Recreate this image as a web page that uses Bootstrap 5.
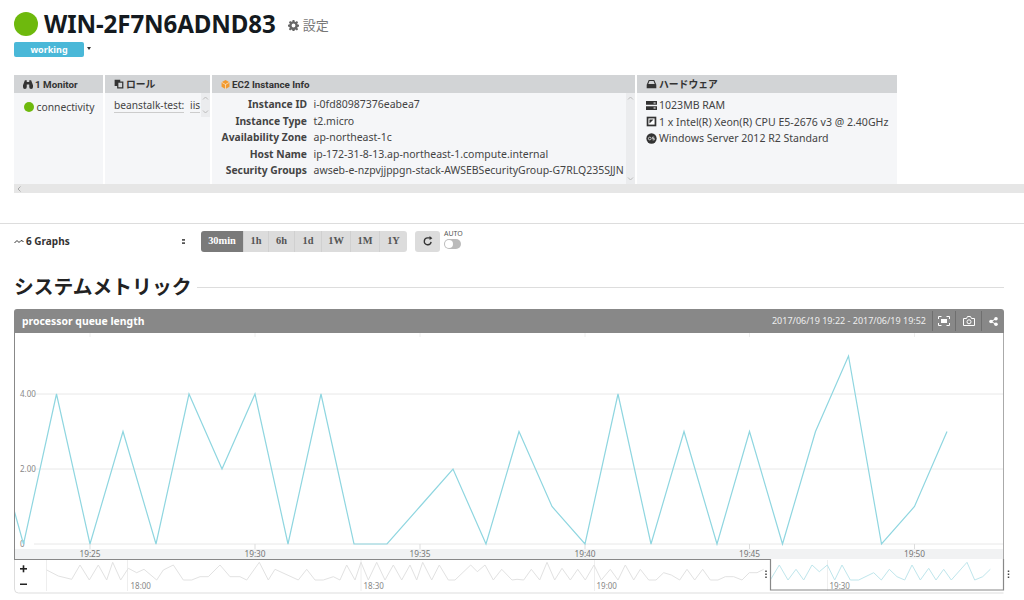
<!DOCTYPE html>
<html lang="ja"><head><meta charset="utf-8"><title>WIN-2F7N6ADND83</title>
<link href="https://cdn.jsdelivr.net/npm/bootstrap@5.3.0/dist/css/bootstrap.min.css" rel="stylesheet">
<style>
html,body{margin:0;height:600px;overflow:hidden;background:#fff}
body{font-family:"Noto Sans","Noto Sans CJK JP",sans-serif;font-size:11.2px;color:#333;line-height:16.5px}
.page-pad{padding:11px 0 0 14px}
.host-dot{width:24px;height:24px;border-radius:50%;background:#6eb90d;margin-right:6px}
.host-name{font-size:24.1px;font-weight:700;color:#141a20;line-height:26px;margin:0;letter-spacing:-.1px}
.setting-link{font-size:13px;color:#777;margin-left:12px;margin-top:2px}
.state-row{height:15px;margin-top:5px}
.state-pill{width:70px;height:15px;background:#4ab8d8;border-radius:2px;color:#fff;font-size:9px;font-weight:700;line-height:15px;text-align:center}
.caret-mini{width:0;height:0;border:2.500px solid transparent;border-top:3px solid #333;border-bottom:0;margin-left:3px;margin-top:-2px}
.info-wrap{margin-top:18px;height:118px;width:1010px}
.info-table{gap:2px;height:109px;width:883px}
.info-col{background:#f5f6f8;position:relative}
.info-head{height:18px;background:#d2d4d6;font-family:Roboto,"Noto Sans CJK JP",sans-serif;font-weight:700;font-size:9.800px;line-height:19px;padding-left:9px;color:#333;display:flex;align-items:center;gap:2px}
.col-a{width:89px}.col-b{width:105px}.col-c{width:423px}.col-d{width:260px}
.info-body{height:91px;position:relative}
.conn-row{padding-top:6px}
.vscroll{position:absolute;right:0;top:0;width:9px;background:#ebecee}
.vscroll svg{position:absolute;left:1px}
.role-tag{border-bottom:1px solid #ccc;padding-bottom:0}
.kv{display:grid;grid-template-columns:95px 1fr;column-gap:6.500px;padding:3px 0 0 0;white-space:nowrap;overflow:hidden;width:414px}
.kv b{text-align:right;font-weight:700;font-size:10.300px;line-height:16.5px}
.kv span{line-height:16.5px;font-size:10.500px}
.hw-row{height:16.5px;display:flex;align-items:center;gap:2px;font-size:10.550px;white-space:nowrap}
.hscroll{height:9px;background:#e6e6e6;color:#999;position:relative}
.hscroll svg{position:absolute;left:3px;top:2px}
.sep-line{height:1px;background:#ddd;margin:30px 0 0 0}
.tool-row{height:34px;align-items:center;padding-left:14px}
.graph-count{width:168px;font-weight:700;font-size:10px;display:flex;align-items:center;gap:2px}
.dots-v{width:19px}
.range-group{height:21px;border-radius:3px;overflow:hidden}
.range-btn{height:21px;background:#dcdcdc;border:0;border-right:1px solid #d0d0d0;padding:0;font-weight:700;color:#555;font-family:"Liberation Serif",serif;font-size:10.400px}
.range-on{background:#7a7a7a;color:#fff;width:43px}
.reload-btn{width:25px;height:21px;background:#dcdcdc;border:0;border-radius:3px;margin-left:8px;padding:0;display:flex;align-items:center;justify-content:center}
.auto-wrap{margin-left:4px;width:30px;font-size:7px;line-height:8px;color:#555;margin-top:-3px}
.auto-switch{display:block;width:17px;height:10px;border-radius:5px;background:#bbb;position:relative;margin-top:1px}
.auto-switch::after{content:"";position:absolute;left:1px;top:1px;width:8px;height:8px;border-radius:50%;background:#fff}
.section-title{margin:15px 20px 0 14px;height:28px;align-items:center}
.section-title h2{font-size:19.800px;font-weight:700;color:#222;margin:0;white-space:nowrap;line-height:28px}
.section-title i{flex:1;height:1px;background:#ddd;margin-left:6px;margin-top:1px}
.graph-panel{margin:8px 20px 0 14px;width:990px}
.graph-head{height:24px;background:#888;border-radius:3px 3px 0 0;color:#fff;align-items:center}
.graph-title{font-size:10.4px;font-weight:700;padding-left:8px;flex:1}
.graph-range{font-size:9px;color:#eee;padding-right:6px}
.head-tool{height:20px;border-left:1px solid #6f6f6f;display:flex;align-items:center;justify-content:center}
.plot-svg{display:block}
</style></head><body>
<div class="page-pad">
  <div class="d-flex align-items-center">
    <div class="host-dot"></div>
    <h1 class="host-name">WIN-2F7N6ADND83</h1>
    <div class="setting-link d-flex align-items-center gap-1">
      <svg width="11" height="11" viewBox="0 0 16 16"><path fill="#666" d="M6.7 0h2.6l.4 2.2 1.4.6L12.900 1.500l1.800 1.800-1.300 1.900.6 1.400 2 .4v2.600l-2 .4-.6 1.400 1.300 1.900-1.800 1.800-1.800-1.300-1.400.6-.4 2.200H6.700l-.4-2.200-1.400-.6-1.800 1.300-1.800-1.800 1.300-1.900-.6-1.400-2-.4V6.900l2-.4.600-1.400-1.300-1.900 1.800-1.800 1.800 1.300 1.400-.6zM8 5.200a2.800 2.800 0 1 0 0 5.600 2.800 2.800 0 0 0 0-5.600z"/></svg>
      <span>設定</span>
    </div>
  </div>
  <div class="state-row d-flex align-items-center">
    <div class="state-pill">working</div>
    <div class="caret-mini"></div>
  </div>
  <div class="info-wrap">
    <div class="info-table d-flex">
      <div class="info-col col-a">
        <div class="info-head"><svg width="10" height="9" viewBox="0 0 16 14"><path fill="#333" d="M3 0h3v3h4V0h3l3 8v3a3 3 0 0 1-6 0V7H6v4a3 3 0 0 1-6 0V8z"/></svg>1 Monitor</div>
        <div class="d-flex align-items-center conn-row">
          <span class="d-inline-block rounded-circle" style="width:10px;height:10px;background:#6eb90d;margin-left:10px"></span>
          <span style="font-size:10.300px;color:#444;margin-left:2.500px">connectivity</span>
        </div>
      </div>
      <div class="info-col col-b">
        <div class="info-head"><svg width="10" height="10" viewBox="0 0 16 16"><path fill="#333" d="M1 1h9v3h5v11H5v-4H1zM7 6v7h6V6z"/></svg>ロール</div>
        <div class="info-body" style="padding:4px 0 0 9px;white-space:nowrap;font-size:10.200px;color:#444">
          <span class="role-tag">beanstalk-test:</span> <span class="role-tag" style="margin-left:3px">iis</span>
          <div class="vscroll" style="height:24px"><svg width="7" height="4" viewBox="0 0 7 4" style="top:3px"><path d="M1 3.500 3.500 1 6 3.500" fill="none" stroke="#bbb"/></svg><svg width="7" height="4" viewBox="0 0 7 4" style="bottom:3px"><path d="M1 .5 3.500 3 6 .5" fill="none" stroke="#bbb"/></svg></div>
        </div>
      </div>
      <div class="info-col col-c">
        <div class="info-head"><svg width="9" height="9" viewBox="0 0 16 16"><path fill="#f29a2e" d="M8 0l7 4v8l-7 4-7-4V4z"/><path stroke="#fff" fill="none" d="M1 4l7 4 7-4M8 8v8"/></svg>EC2 Instance Info</div>
        <div class="info-body">
          <div class="kv" style="color:#444">
            <b>Instance ID</b><span>i-0fd80987376eabea7</span>
            <b>Instance Type</b><span>t2.micro</span>
            <b>Availability Zone</b><span>ap-northeast-1c</span>
            <b>Host Name</b><span>ip-172-31-8-13.ap-northeast-1.compute.internal</span>
            <b>Security Groups</b><span>awseb-e-nzpvjjppgn-stack-AWSEBSecurityGroup-G7RLQ235SJJN</span>
          </div>
          <div class="vscroll" style="height:91px"><svg width="7" height="4" viewBox="0 0 7 4" style="top:3px"><path d="M1 3.500 3.500 1 6 3.500" fill="none" stroke="#bbb"/></svg><svg width="7" height="4" viewBox="0 0 7 4" style="bottom:3px"><path d="M1 .5 3.500 3 6 .5" fill="none" stroke="#bbb"/></svg></div>
        </div>
      </div>
      <div class="info-col col-d">
        <div class="info-head"><svg width="11" height="10" viewBox="0 0 16 14"><path fill="#333" d="M4 1h8l3 7v5H1V8zM5 2.500 3.300 7h9.400L11 2.500z"/></svg>ハードウェア</div>
        <div class="info-body" style="padding:4px 0 0 9px;color:#444">
          <div class="hw-row"><svg width="11" height="9" viewBox="0 0 16 13"><path fill="#333" d="M0 0h16v5.500H0zM0 7.500h16V13H0z"/><path fill="#fff" d="M11 2h3v1.500h-3zM11 9.500h3V11h-3z"/></svg>1023MB RAM</div>
          <div class="hw-row"><svg width="11" height="11" viewBox="0 0 16 16"><path fill="#333" d="M1 1h14v14H1z"/><path fill="#fff" d="M3.500 3.500h9v9h-9z"/><path fill="#333" d="M5 5h6l-6 6z"/></svg>1 x Intel(R) Xeon(R) CPU E5-2676 v3 @ 2.40GHz</div>
          <div class="hw-row"><svg width="11" height="11" viewBox="0 0 16 16"><circle cx="8" cy="8" r="7.500" fill="#333"/><circle cx="5.500" cy="8" r="2" fill="none" stroke="#fff"/><path d="M12 6h-2.500v2H12v2H9.500" fill="none" stroke="#fff"/></svg>Windows Server 2012 R2 Standard</div>
        </div>
      </div>
    </div>
    <div class="hscroll"><svg width="4" height="6" viewBox="0 0 4 6"><path d="M3.500 .5 1 3l2.500 2.500" fill="none" stroke="#aaa"/></svg></div>
  </div>
</div>
<div class="sep-line"></div>
<div class="tool-row d-flex">
  <div class="graph-count"><svg width="10" height="5" viewBox="0 0 10 5"><path d="M.5 4 3 1.500 5 3.500 7 1.500 9.500 2.500" fill="none" stroke="#333"/></svg>6 Graphs</div>
  <div class="dots-v"><svg width="3" height="5" viewBox="0 0 3 5" class="d-block"><path fill="#555" d="M0 0h3v1.800H0zM0 3.200h3V5H0z"/></svg></div>
  <div class="range-group d-flex">
    <button class="range-btn range-on">30min</button>
    <button class="range-btn" style="width:25px">1h</button>
    <button class="range-btn" style="width:26px">6h</button>
    <button class="range-btn" style="width:27px">1d</button>
    <button class="range-btn" style="width:29px">1W</button>
    <button class="range-btn" style="width:29px">1M</button>
    <button class="range-btn" style="width:27px;border:0">1Y</button>
  </div>
  <button class="reload-btn"><svg width="10" height="10" viewBox="0 0 16 16"><path d="M13 9.500A5.500 5.500 0 1 1 8 3h4" fill="none" stroke="#333" stroke-width="2.200"/><path fill="#333" d="M10.500 0 15 3.500 10.500 6.500z"/></svg></button>
  <div class="auto-wrap">AUTO<span class="auto-switch"></span></div>
</div>
<div class="section-title d-flex"><h2>システムメトリック</h2><i></i></div>
<div class="graph-panel">
  <div class="graph-head d-flex">
    <div class="graph-title">processor queue length</div>
    <div class="graph-range">2017/06/19 19:22 - 2017/06/19 19:52</div>
    <div class="head-tool" style="width:23px"><svg width="12" height="10" viewBox="0 0 12 10"><path d="M.5 3V.5H3.500M8.500 .5h3V3M11.500 7v2.500h-3M3.500 9.500h-3V7" fill="none" stroke="#fff"/><rect x="3" y="3" width="6" height="4" fill="#fff"/></svg></div>
    <div class="head-tool" style="width:26px"><svg width="12" height="10" viewBox="0 0 12 10"><path d="M.5 2.500h3l1-2h3l1 2h3v7H.5z" fill="none" stroke="#fff"/><circle cx="6" cy="5.800" r="2" fill="none" stroke="#fff"/></svg></div>
    <div class="head-tool" style="width:23px"><svg width="9" height="9" viewBox="0 0 9 9"><circle cx="7" cy="1.800" r="1.800" fill="#fff"/><circle cx="7" cy="7.200" r="1.800" fill="#fff"/><circle cx="2" cy="4.500" r="1.800" fill="#fff"/><path d="M7 1.800 2 4.500 7 7.200" stroke="#fff" fill="none"/></svg></div>
  </div>
  <svg class="plot-svg" width="1010" height="267" viewBox="14 333 1010 267" font-family="Noto Sans, sans-serif">
    <rect x="14.500" y="333" width="989" height="226" fill="#fff"/>
    <path d="M90 333v4M255 333v4M420 333v4M585 333v4M749.500 333v4M914.500 333v4" stroke="#eee"/>
    <path d="M34 394h970M34 469h970M34 544h970" stroke="#e8e8e8"/>
    <path d="M90 544v5M255 544v5M420 544v5M585 544v5M749.500 544v5M914.500 544v5" stroke="#ddd"/>
    <g font-size="8" fill="#888">
      <text x="20" y="397">4.00</text><text x="20" y="472">2.00</text><text x="20" y="547">0</text>
    </g>
    <polyline fill="none" stroke="#8fd6e0" stroke-width="1.200" points="14,510 23.500,544 56.500,394 90,544 123,431.500 156,544 189,394 222,469 255,394 288,544 321,394 354,544 387,544 420,506.500 453,469 486,544 519,431.500 552,506.500 585,544 618,394 651,544 684,431.500 717,544 749.500,431.500 782.500,544 815.500,431.500 848.500,356 881.500,544 914.500,506.500 947,431.500"/>
    <rect x="15" y="549" width="988" height="10" fill="#f1f2f3"/>
    <g font-size="8.300" fill="#777" text-anchor="middle">
      <text x="90" y="556.500">19:25</text><text x="255" y="556.500">19:30</text><text x="420" y="556.500">19:35</text><text x="585" y="556.500">19:40</text><text x="749.500" y="556.500">19:45</text><text x="914.500" y="556.500">19:50</text>
    </g>
    <path d="M14.500 333v226" stroke="#888"/><path d="M1003.500 333v226" stroke="#aaa"/>
    <path d="M14.500 559v30a4 4 0 0 0 4 4h985" fill="none" stroke="#ddd"/>
    <path d="M46.500 560v31M127.500 560v31M361 560v31M594.500 560v31M827.500 560v31" stroke="#eee"/>
    <polyline fill="none" stroke="#e2e2e2" points="46.700,570 58.300,576 71.700,579.300 80,565 89.300,580 98.300,565 106.700,580 112.700,562.300 120.700,580 128.300,568.300 136.700,572.700 144,569.300 156.700,580 163.300,570 173.300,565 183.300,580 191.700,580 200,576.700 208.300,576.700 220,565 230,576.700 240,576.700 246.700,580 259.300,562.300 268.300,580 275,569.300 298.300,580 306.700,569.300 315,580 323.300,580 333.300,576.700 340,580 346.700,565 355,580 361,562.300 368.300,580 376.700,562.300 385,580 393.300,565 401.700,580 410,565 416.700,580 422.700,562.300 431.700,580 439.300,565 448.300,580 455,580 470.700,565 477.300,571.700 485,565 493.300,580 501.700,569.300 512,580 517,579.300 523.700,580 531.300,569.300 539.700,580 547,562.300 554.700,580 562,568.300 570.300,580 577.700,569.300 585.300,580 594,565 601.300,580 610.300,569.300 618,580 625.300,565 633.700,580 640.300,569.300 648.700,580 656,580 663.700,572.700 671.300,575 679.700,580 687,569.300 694.700,580 702.700,569.300 710.300,580 718,580 725.300,576.700 733.700,576.700 742,580 749.300,572.700 757,572.700 763.700,569.300"/>
    <polyline fill="none" stroke="#bfe6ec" points="770.300,580 779.300,565 788,580 796,569.300 803.700,580 812,565 819.300,571.700 827.300,565 834.700,580 842,565 850.300,580 858.700,580 873.700,572.700 881.300,580 889.300,569.300 897,576.700 904.700,580 912,565 920.300,580 928.700,568.300 936,580 943.700,569.300 951.300,580 967,562.300 974.700,580 982.700,576.700 990.300,569.300"/>
    <g font-size="8" fill="#888"><text x="130.500" y="589">18:00</text><text x="363.500" y="589">18:30</text><text x="596.500" y="589">19:00</text><text x="829.500" y="589">19:30</text></g>
    <path d="M14 559.500H770.500V590H1003.500V559" fill="none" stroke="#888" stroke-width="1.200"/>
    <g fill="#222"><rect x="20" y="568" width="7" height="1.600"/><rect x="22.700" y="565.300" width="1.600" height="7"/><rect x="20" y="583.500" width="7" height="1.500"/></g>
    <path d="M766 570.500v1.500M766 573.500v1.500M766 576.500v1.500M1008.500 570.500v1.500M1008.500 573.500v1.500M1008.500 576.500v1.500" stroke="#444" stroke-width="1.500"/>
  </svg>
</div>
<script src="https://cdn.jsdelivr.net/npm/bootstrap@5.3.0/dist/js/bootstrap.bundle.min.js"></script>
</body></html>
